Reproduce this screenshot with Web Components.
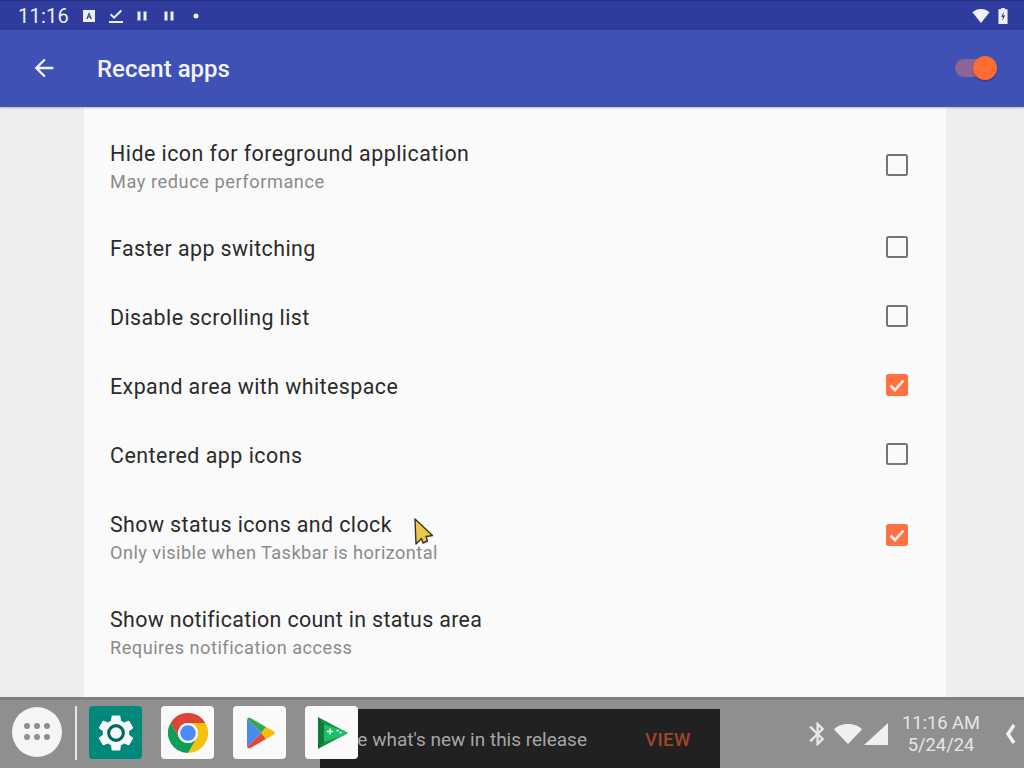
<!DOCTYPE html>
<html><head><meta charset="utf-8"><style>
html,body{margin:0;padding:0;background:#eee}
body{width:1024px;height:768px;overflow:hidden;font-family:Roboto,sans-serif}
</style></head><body>
<app-shell>
  <status-bar slot="top"></status-bar>
  <app-toolbar slot="top" title-text="Recent apps"></app-toolbar>
  <pref-row style="--h:96px;--p:6px;--ls:.47px;--ss:.56px" title-text="Hide icon for foreground application" sub="May reduce performance"></pref-row>
  <pref-row style="--h:69px;--ls:.42px" title-text="Faster app switching"></pref-row>
  <pref-row style="--h:69px;--ls:.42px" title-text="Disable scrolling list"></pref-row>
  <pref-row style="--h:69px;--ls:.43px" title-text="Expand area with whitespace" checked></pref-row>
  <pref-row style="--h:69px;--ls:.5px" title-text="Centered app icons"></pref-row>
  <pref-row style="--h:91px;--p:8px;--ls:.4px;--ss:.42px" title-text="Show status icons and clock" sub="Only visible when Taskbar is horizontal" checked></pref-row>
  <pref-row style="--h:99px;--p:8px;--ls:.34px;--ss:.49px" title-text="Show notification count in status area" sub="Requires notification access" nobox></pref-row>
  <mouse-cursor slot="over"></mouse-cursor>
  <task-bar slot="over"></task-bar>
</app-shell>
<script>
function def(name, css, html){
  customElements.define(name, class extends HTMLElement{
    connectedCallback(){
      if(this.shadowRoot) return;
      const r=this.attachShadow({mode:'open'});
      r.innerHTML='<style>'+css+'</style>'+(typeof html==='function'?html(this):html);
    }
  });
}
def('app-shell',`
:host{display:flex;flex-direction:column;position:relative;width:1024px;height:768px;overflow:hidden;background:#eeeeee}
.main{flex:1;display:flex;justify-content:center;min-height:0}
.card{width:862px;margin-left:6px;background:#fafafa;padding-top:10px;box-sizing:border-box;overflow:hidden}
`,`<slot name="top"></slot><div class="main"><div class="card"><slot></slot></div></div><slot name="over"></slot>`);

def('status-bar',`
:host{display:flex;align-items:center;height:30px;background:#2f3c9e;color:#eef0fa;padding-left:18px;padding-right:16px;font-size:20px;box-sizing:border-box;border-top:1px solid #24307f}
.t{width:64px;letter-spacing:.25px}
svg{display:block;fill:#eef0fa}
.i{display:flex;align-items:center}
.sp{flex:1}
`,`<span class="t">11:16</span>
<div class="i">
<svg width="14" height="14" viewBox="0 0 14 14"><path fill-rule="evenodd" d="M1 1h12v12H1zM7 3.200 4.200 10h1.500l.5-1.400h1.700l.5 1.400h1.500L7.200 3.200zM7 5.600l.5 1.800H6.500z"/></svg>
<svg width="16" height="16" viewBox="0 0 16 16" style="margin-left:12px"><path d="M1 13h14v2H1zM2 7l1.400-1.400 2.600 2.600L12.600 1.800 14 3.200 6 11z"/></svg>
<svg width="12" height="12" viewBox="0 0 12 12" style="margin-left:12px"><path d="M1.500 1.500h3v9h-3zM7.500 1.500h3v9h-3z"/></svg>
<svg width="12" height="12" viewBox="0 0 12 12" style="margin-left:15px"><path d="M1.500 1.500h3v9h-3zM7.500 1.500h3v9h-3z"/></svg>
<svg width="6" height="6" viewBox="0 0 6 6" style="margin-left:18px"><circle cx="3" cy="3" r="2.500"/></svg>
</div><span class="sp"></span>
<svg width="18" height="14" viewBox="0 0 20 15" preserveAspectRatio="none" style="margin-right:8px"><path d="M0.500 3.500C3 1.300 6.300 0 10 0s7 1.300 9.500 3.500L10 15z"/></svg>
<svg width="10" height="16" viewBox="0 0 11 18" preserveAspectRatio="none"><path fill-rule="evenodd" d="M3.500 0h4v1.500H10.500V18H.5V1.500h3zM6.300 4 3.500 10h2l-.8 4.500L7.800 8.500h-2z"/></svg>
`);

def('app-toolbar',`
:host{display:flex;align-items:center;height:77px;background:#3f51b5;color:#f3f4fb;position:relative;box-sizing:border-box;padding-bottom:2px;box-shadow:0 1px 2px rgba(0,0,0,.25);z-index:1}
svg.back{margin-left:30px;width:28px;height:28px;fill:#f3f4fb;display:block}
.title{margin-left:39px;font-size:24px;font-weight:500;flex:1;padding-top:2px}
.sw{position:relative;width:42px;height:24px;margin-right:27px}
.track{position:absolute;left:0;top:3px;width:30px;height:18px;border-radius:9px;background:#8d6594}
.thumb{position:absolute;right:0;top:0;width:24px;height:24px;border-radius:50%;background:#ff6b35;box-shadow:0 1px 2px rgba(0,0,0,.35)}
`,h=>`<svg class="back" viewBox="0 0 24 24"><path d="M20 11H7.830l5.590-5.590L12 4l-8 8 8 8 1.410-1.410L7.830 13H20v-2z"/></svg><span class="title">${h.getAttribute('title-text')}</span><div class="sw"><div class="track"></div><div class="thumb"></div></div>`);

def('pref-row',`
:host{display:flex;align-items:center;height:var(--h);box-sizing:border-box;padding-left:26px;padding-right:38px}
.txt{flex:1;padding-top:var(--p,2px)}
.a{font-size:21.4px;line-height:28px;color:#2b2b2b;letter-spacing:var(--ls,.47px)}
.b{font-size:18.2px;line-height:28px;color:#8a8a8a;letter-spacing:var(--ss,.42px)}
.box{width:22px;height:22px;box-sizing:border-box;border-radius:2.5px;border:2.5px solid #757575;display:flex}
.box.up{margin-bottom:2px}
.box.on{background:#ff7043;border:none}
svg{display:block}
`,h=>{
 const s=h.getAttribute('sub');
 const on=h.hasAttribute('checked');
 const box=h.hasAttribute('nobox')?'':`<div class="box${on?' on':''}${s?'':' up'}">${on?'<svg width="22" height="22" viewBox="0 0 22 22"><path d="M4.500 11.500 9 16 17.500 6.500" fill="none" stroke="#fff3ec" stroke-width="2.600"/></svg>':''}</div>`;
 return `<div class="txt"><div class="a">${h.getAttribute('title-text')}</div>${s?`<div class="b">${s}</div>`:''}</div>`+box;
});

def('mouse-cursor',`
:host{position:absolute;left:413px;top:518px;width:22px;height:30px;z-index:3}
svg{display:block}
`,`<svg width="22" height="30" viewBox="0 0 22 30"><path d="M2 1 19.500 17.500 13 18.500 14.500 23 10 25 8.500 20.500 3 26z" fill="#e9c84a" stroke="#3a3320" stroke-width="1.400" stroke-linejoin="round"/></svg>`);

def('task-bar',`
:host{position:absolute;left:0;right:0;bottom:0;height:71px;background:#8f8f8f;border-top:3px solid #7f7f7f;box-sizing:border-box;display:flex;align-items:center;z-index:2;color:#e8e8e8}
.snack{position:absolute;left:320px;top:9px;width:400px;height:59px;background:#212121;color:#a6a6a6;font-size:19px;display:flex;align-items:center;padding-top:2px;box-sizing:border-box}
.m{margin-left:16px;white-space:nowrap}
.view{position:absolute;left:325px;color:#a3452a;font-weight:500;font-size:18.6px;letter-spacing:.4px}
.apps{position:relative;width:50px;height:50px;border-radius:50%;background:#f5f5f5;margin-left:12px;flex:none;display:flex;align-items:center;justify-content:center;margin-top:-4px}
.div{position:relative;width:2px;height:54px;background:#e6e6e6;margin-left:13px;margin-right:12px;flex:none;margin-top:-3px}
.tile{position:relative;width:53px;height:53px;border-radius:4px;background:#fafafa;margin-right:19px;flex:none;display:flex;align-items:center;justify-content:center;margin-top:-3px;z-index:1}
.tile.s{background:#00897b}
svg{display:block}
.tray{position:absolute;left:807px;top:0;height:68px;display:flex;align-items:center;right:0}
.clock{font-size:18.3px;line-height:22px;text-align:center;width:80px;margin-left:12px;color:#e6e6e6;margin-top:-1px}
`,`
<div class="snack"><span class="m">See what's new in this release</span><span class="view">VIEW</span></div>
<div class="apps"><svg width="30" height="20" viewBox="0 0 30 20" fill="#8f8f8f"><circle cx="5" cy="4" r="3"/><circle cx="15" cy="4" r="3"/><circle cx="25" cy="4" r="3"/><circle cx="5" cy="15" r="3"/><circle cx="15" cy="15" r="3"/><circle cx="25" cy="15" r="3"/></svg></div>
<div class="div"></div>
<div class="tile s"><svg width="44" height="44" viewBox="0 0 24 24"><path fill="#f5f7f7" d="M19.140 12.940c.04-.3.06-.61.06-.94 0-.32-.02-.64-.07-.94l2.030-1.580a.49.49 0 0 0 .12-.61l-1.920-3.320a.488.488 0 0 0-.59-.22l-2.390.96c-.5-.38-1.030-.7-1.620-.94l-.36-2.540a.484.484 0 0 0-.48-.41h-3.840c-.24 0-.43.17-.47.41l-.36 2.540c-.59.24-1.130.57-1.620.94l-2.390-.96c-.22-.08-.47 0-.59.22L2.740 8.870c-.12.21-.08.47.12.61l2.030 1.580c-.05.3-.09.63-.09.94s.02.64.07.94l-2.030 1.580a.49.49 0 0 0-.12.61l1.920 3.320c.12.22.37.29.59.22l2.390-.96c.5.38 1.030.7 1.620.94l.36 2.540c.05.24.24.41.48.41h3.840c.24 0 .44-.17.47-.41l.36-2.540c.59-.24 1.130-.56 1.620-.94l2.390.96c.22.08.47 0 .59-.22l1.920-3.320c.12-.22.07-.47-.12-.61l-2.010-1.580z"/><circle cx="12" cy="12" r="4" fill="#f5f7f7" stroke="#00695c" stroke-width="1.700"/></svg></div>
<div class="tile"><svg width="40" height="40" viewBox="6 6 36 36"><path fill="#db4437" d="M8.400 15A18 18 0 0 1 39.600 15H24A9 9 0 0 0 16.200 28.500z"/><path fill="#f4c20d" d="M39.600 15A18 18 0 0 1 24 42L31.800 28.500A9 9 0 0 0 24 15z"/><path fill="#0f9d58" d="M24 42A18 18 0 0 1 8.400 15L16.200 28.500A9 9 0 0 0 31.800 28.500z"/><circle cx="24" cy="24" r="9" fill="#f5f5f5"/><circle cx="24" cy="24" r="7" fill="#4c8bf5"/></svg></div>
<div class="tile"><svg width="32" height="34" viewBox="0 0 32 34" style="margin-left:3px"><path fill="#4a8ae8" d="M2 3 2 31 16.500 17z"/><path fill="#34a853" d="M2 3C3 1.700 4.500 1.500 6 2.300L21 11 16.500 17z"/><path fill="#ea4335" d="M2 31C3 32.300 4.500 32.500 6 31.700L21 23 16.500 17z"/><path fill="#fbbc04" d="M21 11 28.500 15.300C30.500 16.500 30.500 17.500 28.500 18.700L21 23 16.500 17z"/></svg></div>
<div class="tile"><svg width="32" height="34" viewBox="0 0 32 34" style="margin-left:2px"><path fill="#1e8e3e" d="M1 1 31 17 1 33z"/><path fill="#0f7a3a" d="M1 1 7 8.500V26L1 33z"/><path fill="#1fbf6a" d="M7 8.500 28 15C30 16 30 18 28 19L7 26z"/><path d="M10 15.500h6M13 12.500v6" stroke="#eafff3" stroke-width="1.500" fill="none"/><circle cx="20.500" cy="14.500" r="1.100" fill="#eafff3"/><circle cx="23.500" cy="16.500" r="1.100" fill="#eafff3"/></svg></div>
<div class="tray">
<svg width="20" height="26" viewBox="4 1 15 22" fill="#e8e8e8"><path d="M17.710 7.710L12 2h-1v7.590L6.410 5 5 6.410 10.590 12 5 17.590 6.410 19 11 14.410V22h1l5.710-5.710-4.300-4.290 4.300-4.290zM13 5.830l1.880 1.880L13 9.590V5.830zm1.880 10.460L13 18.170v-3.760l1.880 1.880z"/></svg>
<svg width="28" height="22" viewBox="0 0 28 22" style="margin-left:7px" fill="#f0f0f0"><path d="M0 6.500C3.500 2.500 8.500 1 14 1s10.500 1.500 14 5.500L14 21z"/></svg>
<svg width="26" height="24" viewBox="0 0 26 24" style="margin-left:1px" fill="#f0f0f0"><path d="M25 1V23H1z"/></svg>
<div class="clock">11:16 AM<br>5/24/24</div>
<svg style="position:absolute;left:198px;top:24px" width="12" height="20" viewBox="0 0 12 20"><path d="M9 1 3 10 9 19" fill="none" stroke="#f0f0f0" stroke-width="3.500"/></svg>
</div>
`);
</script>
</body></html>
